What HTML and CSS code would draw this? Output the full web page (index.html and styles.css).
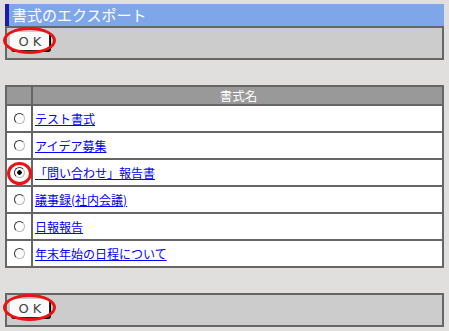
FILE: index.html
```html
<!DOCTYPE html>
<html lang="ja">

<head>
    <meta charset="UTF-8">
    <title>書式のエクスポート</title>
    <link rel="stylesheet" href="styles.css">
</head>

<body>
    <div class="title">書式のエクスポート</div>

    <div class="bar">
        <span class="mark">
            <button class="ok">OK</button>
            <span class="ring"></span>
        </span>
    </div>

    <table class="list">
        <tr class="head">
            <th class="sel"></th>
            <th>書式名</th>
        </tr>
        <tr>
            <td class="sel"><input type="radio" name="fmt"></td>
            <td><a href="#">テスト書式</a></td>
        </tr>
        <tr>
            <td class="sel"><input type="radio" name="fmt"></td>
            <td><a href="#">アイデア募集</a></td>
        </tr>
        <tr>
            <td class="sel">
                <span class="mark dot">
                    <input type="radio" name="fmt" checked>
                    <span class="ring small"></span>
                </span>
            </td>
            <td><a href="#">「問い合わせ」報告書</a></td>
        </tr>
        <tr>
            <td class="sel"><input type="radio" name="fmt"></td>
            <td><a href="#">議事録(社内会議)</a></td>
        </tr>
        <tr>
            <td class="sel"><input type="radio" name="fmt"></td>
            <td><a href="#">日報報告</a></td>
        </tr>
        <tr>
            <td class="sel"><input type="radio" name="fmt"></td>
            <td><a href="#">年末年始の日程について</a></td>
        </tr>
    </table>

    <div class="bar">
        <span class="mark">
            <button class="ok">OK</button>
            <span class="ring"></span>
        </span>
    </div>
</body>

</html>
```

FILE: styles.css
```css
body {
    margin: 0;
    padding: 4px 5px;
    background-color: #e0dfdd;
    font-family: "Noto Sans CJK JP", "DejaVu Sans", sans-serif;
}

.title {
    height: 22px;
    line-height: 22px;
    padding-left: 3px;
    border-left: 4px solid #1c1ca8;
    background-color: #7ea6e9;
    color: white;
    font-size: 15px;
}

.bar {
    display: flex;
    align-items: flex-start;
    height: 34px;
    padding: 4px 3px 0;
    border: 2px solid #666;
    background-color: #cccccc;
    box-sizing: border-box;
}

.mark {
    position: relative;
    display: block;
}

.ok {
    display: block;
    width: 40px;
    height: 19px;
    padding: 0;
    font-family: "DejaVu Sans", sans-serif;
    font-size: 13px;
    line-height: 16px;
    letter-spacing: 4px;
    text-indent: 4px;
    color: #444;
    background-color: #fafafa;
    border: 1px solid;
    border-color: #fff #222 #222 #fff;
    box-shadow: 1px 1px 0 #000;
    border-radius: 3px;
}

.ring {
    position: absolute;
    left: -7px;
    top: -5px;
    width: 47px;
    height: 21px;
    border: 3px solid #ee1111;
    border-radius: 50%;
}

.mark.dot {
    width: 13px;
    margin: 0 auto;
}

.ring.small {
    left: -6px;
    top: -5px;
    width: 19px;
    height: 17px;
}

.list {
    width: 100%;
    margin: 25px 0;
    border-collapse: collapse;
    border: 2px solid #666;
    background-color: white;
}

.list tr {
    height: 27px;
}

.list tr.head {
    height: 19px;
}

.list th,
.list td {
    border: 2px solid #666;
    padding: 0 0 0 2px;
    font-size: 12px;
    line-height: 16px;
}

.list th {
    background-color: #999999;
    color: white;
    font-weight: normal;
    font-size: 12.5px;
}

.list .sel {
    width: 24px;
    padding: 0;
    text-align: center;
}

.list a {
    color: #0000ff;
}

.list input {
    appearance: none;
    display: block;
    margin: 0 auto;
    width: 11px;
    height: 11px;
    border-radius: 50%;
    border: 1px solid;
    border-color: #333 #bbb #bbb #333;
    background-color: white;
}

.list input:checked {
    background: radial-gradient(circle, #000 0 2px, white 2.5px);
}
```
